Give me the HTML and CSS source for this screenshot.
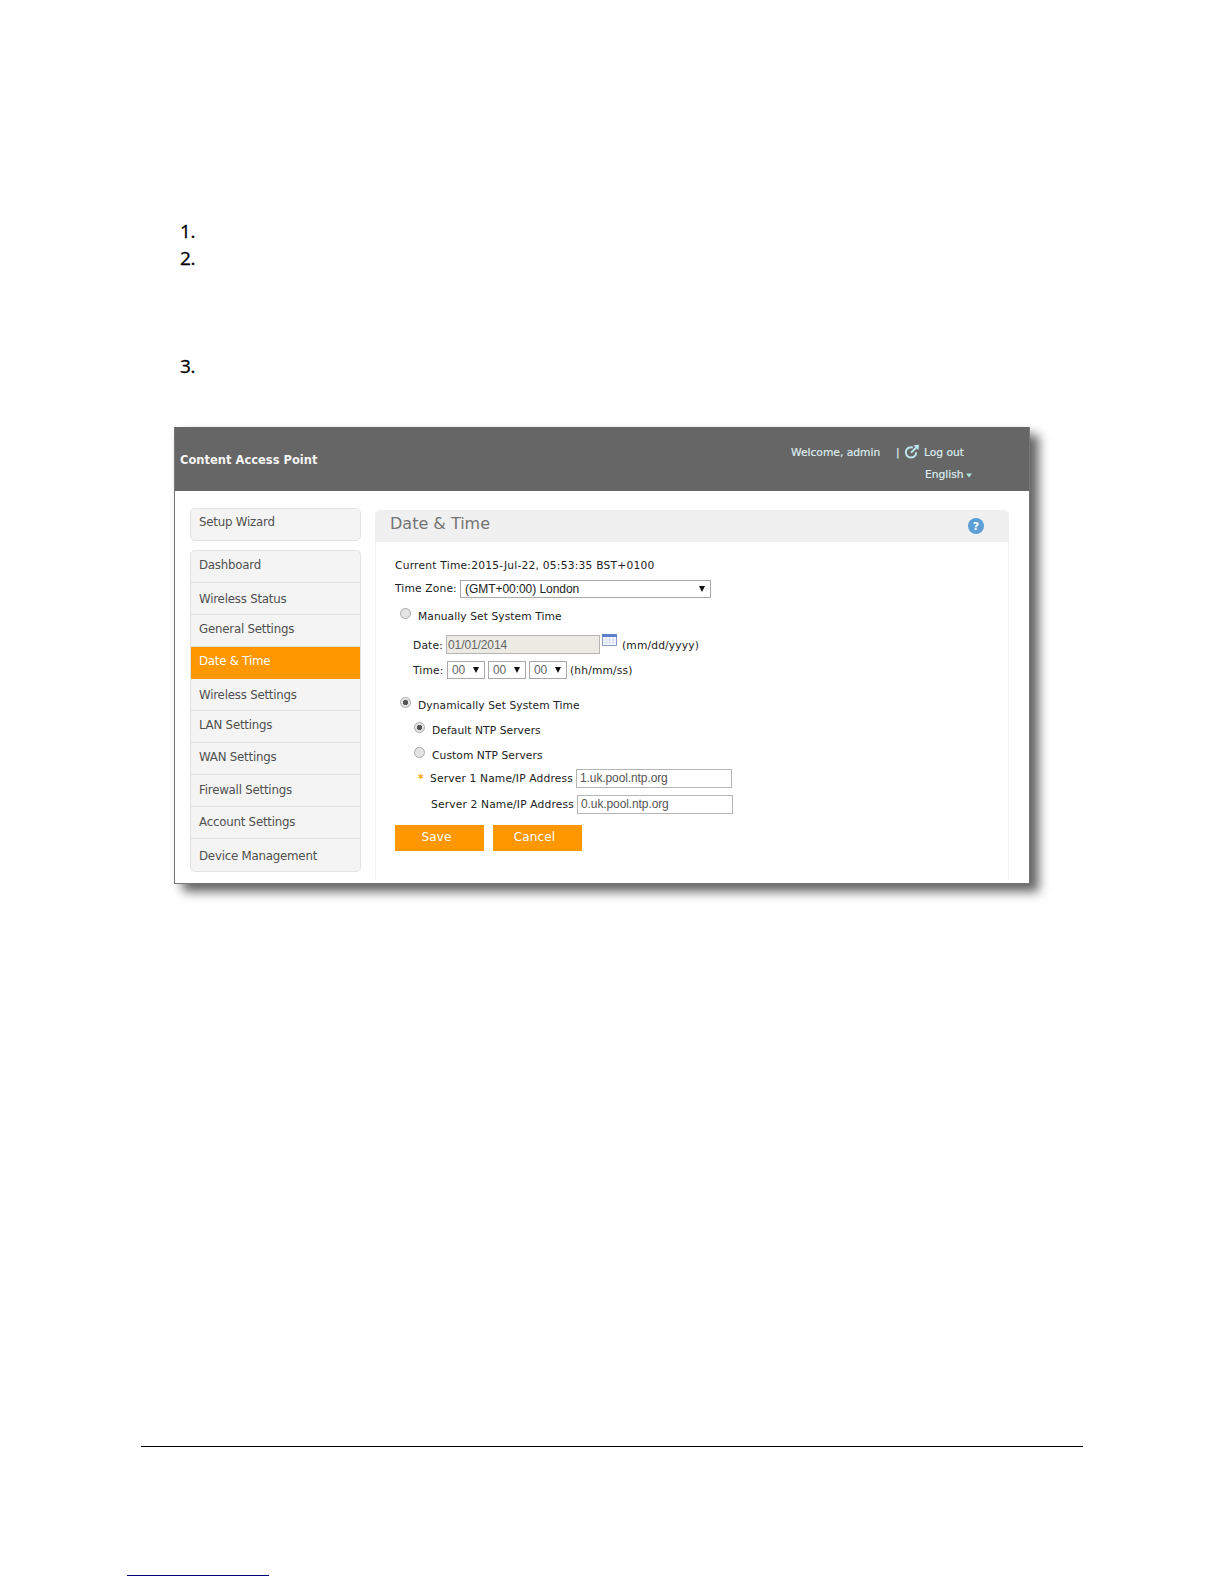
FILE: index.html
```html
<!DOCTYPE html>
<html lang="en">
<head>
<meta charset="utf-8">
<title>Content Access Point</title>
<link rel="stylesheet" href="styles.css">
</head>
<body>
<div class="page">
  <ol class="steps">
    <li class="step">1.</li>
    <li class="step step-long">2.</li>
    <li class="step">3.</li>
  </ol>
  <section class="window">
    <header class="topbar">
      <h1 class="brand">Content Access Point</h1>
      <div class="account">
        <div class="account-row">
          <span class="welcome">Welcome, admin</span>
          <span class="sep">|</span>
          <svg class="logout-icon" viewBox="0 0 16 16"><path d="M9 3.6A5.2 5.2 0 1 0 12.200 8.200" fill="none" stroke="#b8e4ea" stroke-width="2"/><path d="M7 8.800L12.400 3.400" stroke="#b8e4ea" stroke-width="2"/><path d="M9.500 1.200L15 .8L14.500 6.300z" fill="#b8e4ea"/></svg>
          <span class="logout">Log out</span>
        </div>
        <div class="language"><span class="language-name">English</span><svg class="caret" viewBox="0 0 6 5"><path d="M0 .5h6L3 4.5z" fill="#a9e6dc"/></svg></div>
      </div>
    </header>
    <div class="body">
      <nav class="sidebar">
        <div class="menu wizard"><a class="item first">Setup Wizard</a></div>
        <div class="menu">
          <a class="item">Dashboard</a>
          <a class="item low">Wireless Status</a>
          <a class="item">General Settings</a>
          <a class="item active">Date &amp; Time</a>
          <a class="item low">Wireless Settings</a>
          <a class="item">LAN Settings</a>
          <a class="item">WAN Settings</a>
          <a class="item mid">Firewall Settings</a>
          <a class="item mid">Account Settings</a>
          <a class="item lowest">Device Management</a>
        </div>
      </nav>
      <main class="panel">
        <div class="panel-head">
          <h2 class="panel-title">Date &amp; Time</h2>
          <svg class="help" viewBox="0 0 16 16"><circle cx="8" cy="8" r="8" fill="#5b9fd6"/><text x="8" y="12" text-anchor="middle" class="help-mark">?</text></svg>
        </div>
        <form class="form">
          <div class="row current">Current Time:2015-Jul-22, 05:53:35 BST+0100</div>
          <div class="row zone"><span class="zone-label">Time Zone:</span><span class="select zone-select"><span>(GMT+00:00) London</span><i class="arrow"></i></span></div>
          <div class="row manual"><i class="radio"></i><span class="option">Manually Set System Time</span></div>
          <div class="row date"><span class="date-label">Date:</span><span class="field disabled">01/01/2014</span>
            <svg class="calendar" viewBox="0 0 15 12"><rect x=".5" y=".5" width="14" height="11" fill="#f6f8fd" stroke="#8d9bc4"/><rect width="15" height="3" fill="#5c80cc"/><path d="M1 6h13M1 8.5h13M4 3v8M7.500 3v8M11 3v8" stroke="#d3dbee" stroke-width=".8"/></svg>
            <span class="format">(mm/dd/yyyy)</span></div>
          <div class="row time"><span class="time-label">Time:</span><span class="select digit">00<i class="arrow"></i></span><span class="select digit">00<i class="arrow"></i></span><span class="select digit">00<i class="arrow"></i></span><span class="format">(hh/mm/ss)</span></div>
          <div class="row dynamic"><i class="radio on"></i><span class="option">Dynamically Set System Time</span></div>
          <div class="row nested"><i class="radio on"></i><span class="option">Default NTP Servers</span></div>
          <div class="row nested"><i class="radio"></i><span class="option">Custom NTP Servers</span></div>
          <div class="row server"><span class="star">*</span><span class="server-label">Server 1 Name/IP Address</span><span class="field">1.uk.pool.ntp.org</span></div>
          <div class="row server second"><span class="star"></span><span class="server-label">Server 2 Name/IP Address</span><span class="field">0.uk.pool.ntp.org</span></div>
          <div class="actions"><span class="button">Save</span><span class="button">Cancel</span></div>
        </form>
      </main>
    </div>
  </section>
  <footer class="footer"><div class="link-line"></div></footer>
</div>
</body>
</html>
```
FILE: styles.css
```css
* { box-sizing: border-box; }
body { margin: 0; background: #fff; font-family: "DejaVu Sans", sans-serif; }
.page { width: 1224px; height: 1584px; padding-top: 218px; overflow: hidden; display: flex; flex-direction: column; }
.steps { list-style: none; margin: 0; padding: 0 0 0 180px; height: 209px; font: 19px/27px "Open Sans", sans-serif; letter-spacing: -.3px; color: #000; -webkit-text-stroke: .3px; }
.step { height: 27px; }
.step-long { height: 108px; }
.window { width: 856px; height: 457px; margin-left: 174px; border: 1px solid #777; border-top: 0; background: #fff; box-shadow: 9px 8px 10px rgba(0,0,0,.58), 2px 2px 8px rgba(0,0,0,.08); overflow: hidden; flex: none; }
.topbar { height: 64px; margin: 0 -1px; padding-left: 6px; background: #666; color: #f4f4f4; display: flex; justify-content: space-between; }
.brand { margin: 0; padding-top: 1px; font-size: 11.5px; line-height: 64px; font-weight: bold; white-space: nowrap; }
.account { width: 239px; padding-top: 17px; font-size: 10.7px; line-height: 18px; color: #dceaec; -webkit-text-stroke: .2px; }
.account-row { display: flex; height: 22px; white-space: nowrap; }
.welcome { width: 105px; }
.sep { width: 8px; }
.logout-icon { width: 16px; height: 16px; margin: 0 4px 0 0; }
.language { display: flex; padding-left: 134px; align-items: center; }
.language-name { width: 41px; }
.caret { width: 6px; height: 5px; }
.body { display: flex; padding: 17px 20px 0 15px; height: 392px; }
.sidebar { width: 171px; margin-right: 14px; }
.menu { border: 1px solid #e3e3e3; border-radius: 5px; background: #f4f4f4; height: 322px; overflow: hidden; }
.wizard { height: 33px; margin-bottom: 9px; }
.item { display: block; height: 32px; padding: 5px 0 0 8px; border-bottom: 1px solid #e0e0e0; font-size: 11.8px; letter-spacing: -.22px; line-height: 18px; color: #505050; white-space: nowrap; }
.first { padding-top: 4px; }
.mid { padding-top: 6px; }
.low { padding-top: 7px; }
.lowest { padding-top: 8px; }
.item:last-child { border-bottom: 0; }
.active { background: #ff9800; color: #fff; border-color: #ff9800; }
.panel { flex: 1; margin-top: 2px; height: 370px; border: 1px solid #f3f3f3; border-width: 0 1px; border-radius: 5px 5px 0 0; }
.panel-head { margin: 0 -1px; height: 32px; padding: 0 25px 0 15px; display: flex; justify-content: space-between; background: #f0f0f0; border-radius: 5px 5px 0 0; }
.panel-title { margin: 0; font-size: 16px; line-height: 28px; font-weight: normal; color: #747474; white-space: nowrap; }
.help { width: 16px; height: 16px; margin-top: 8px; }
.help-mark { font: bold 11px "DejaVu Sans", sans-serif; fill: #fff; }
.form { padding: 12px 0 0 19px; font-size: 10.7px; letter-spacing: .15px; color: #222; }
.row { display: flex; align-items: center; white-space: nowrap; }
.current { height: 22px; letter-spacing: .22px; }
.zone { height: 25px; }
.zone-label { width: 65px; }
.select { display: flex; align-items: center; justify-content: space-between; height: 18px; padding: 0 5px 0 4px; border: 1px solid #a9a9a9; background: #fff; font: 12px "Liberation Sans", sans-serif; letter-spacing: -.05px; }
.arrow { border: 3px solid transparent; border-top: 6px solid #111; border-bottom: 0; }
.zone-select { width: 251px; }
.manual { height: 28px; padding-left: 5px; }
.radio { width: 11px; height: 11px; margin: -3px 7px 0 0; border: 1px solid #aaa; border-radius: 50%; background: #e4e4e4; }
.option { padding-top: 3px; letter-spacing: .07px; }
.on { background: radial-gradient(circle, #555 0 2.3px, #e4e4e4 3px); }
.date { height: 31px; padding-left: 18px; }
.date-label { width: 33px; }
.date-label, .time-label, .format { padding-top: 1px; }
.field { display: flex; align-items: center; width: 156px; height: 19px; padding-left: 3px; border: 1px solid #b5b5b5; background: #fff; color: #555; font: 12px "Liberation Sans", sans-serif; letter-spacing: -.1px; }
.disabled { width: 154px; padding-left: 1px; background: #ebebe4; color: #666; }
.calendar { width: 15px; height: 12px; margin: -9px 5px 0 2px; }
.time { height: 19px; padding-left: 18px; }
.time-label { width: 34px; }
.digit { width: 38px; margin-right: 3px; color: #666; }
.dynamic { height: 25px; margin-top: 12px; padding-left: 5px; }
.nested { height: 25px; padding-left: 19px; }
.server { height: 24px; padding-left: 23px; }
.star { width: 12px; color: #f5a300; font-weight: bold; }
.server-label { width: 146px; padding-top: 1px; }
.second { height: 28px; padding-left: 24px; }
.actions { display: flex; gap: 9px; margin-top: 7px; }
.button { width: 89px; height: 26px; padding-right: 6px; background: #ff9800; color: #fff; font-size: 12px; line-height: 25px; text-align: center; }
.footer { width: 942px; height: 138px; margin: 562px 0 0 141px; border-top: 1px solid #000; flex: none; }
.link-line { width: 142px; height: 1px; margin: 128px 0 0 -14px; background: #00007c; }
```
